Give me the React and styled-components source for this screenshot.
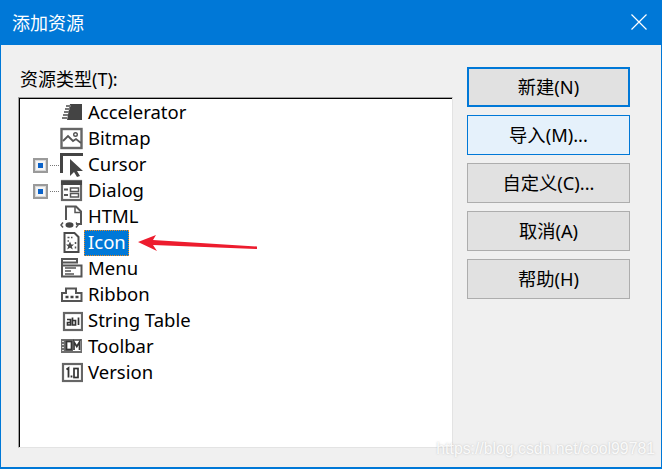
import React from "react";
import styled, { createGlobalStyle } from "styled-components";

const Global = createGlobalStyle`
  html, body { margin: 0; padding: 0; background: #f0f0f0; }
  * { box-sizing: border-box; }
`;

const FONT = `"Noto Sans", "Noto Sans CJK SC", sans-serif`;

const Window = styled.div`
  position: relative;
  width: 662px;
  height: 469px;
  display: flex;
  flex-direction: column;
  border: solid #0078d7;
  border-width: 0 1px 2px 1px;
  background: #f0f0f0;
  font-family: ${FONT};
  color: #000;
  overflow: hidden;
`;

const TitleBar = styled.div`
  height: 45px;
  margin: 0 -1px;
  padding: 0 15px 2px 12px;
  display: flex;
  align-items: center;
  justify-content: space-between;
  background: #0078d7;
  color: #fff;
  font-size: 18px;
  flex: none;
`;

const Body = styled.div`
  flex: 1;
  display: flex;
  gap: 14px;
  padding: 22px 0 0 17px;
`;

const LeftPane = styled.div`
  width: 435px;
  display: flex;
  flex-direction: column;
`;

const FieldLabel = styled.div`
  height: 30px;
  padding-left: 2px;
  font-size: 18px;
  line-height: 24px;
`;

const TreeBox = styled.div`
  height: 351px;
  padding: 2px 0 0 1px;
  background: #fff;
  border: 1px solid;
  border-color: #a0a0a0 #e3e3e3 #e3e3e3 #a0a0a0;
  box-shadow: inset 1px 1px 0 #000;
`;

const TreeRow = styled.div`
  height: 26px;
  display: flex;
  align-items: center;
`;

const Slot = styled.div`
  width: 40px;
  height: 100%;
  padding-left: 13px;
  display: flex;
  align-items: center;
  flex: none;
`;

const Expander = styled.div`
  width: 15px;
  height: 15px;
  border: 2px solid #9a9a9a;
  background: #f4f4f4;
  box-shadow: inset 0 0 0 1px #d8d8d8;
  display: flex;
  align-items: center;
  justify-content: center;
  flex: none;
  &::after {
    content: "";
    width: 5px;
    height: 5px;
    background: #0a62c9;
  }
`;

const Dots = styled.div`
  width: 9px;
  margin-left: 2px;
  border-top: 1px dotted #777;
`;

const IconWrap = styled.svg`
  width: 23px;
  height: 24px;
  flex: none;
  fill: none;
  stroke: #555;
  stroke-width: 2;
`;

const RowLabel = styled.span`
  margin-left: 1px;
  padding: 0 2px 0 3px;
  height: 26px;
  line-height: 21px;
  font-size: 18.5px;
  border: 1px dotted ${(p) => (p.$selected ? "#f08a1d" : "transparent")};
  background: ${(p) => (p.$selected ? "#0078d7" : "transparent")};
  color: ${(p) => (p.$selected ? "#fff" : "#000")};
`;

const ButtonColumn = styled.div`
  width: 163px;
  display: flex;
  flex-direction: column;
  gap: 8px;
`;

const DialogButton = styled.div`
  height: 40px;
  padding-bottom: 2px;
  display: flex;
  align-items: center;
  justify-content: center;
  font-size: 18.3px;
  background: ${(p) => (p.$hover ? "#e5f1fb" : "#e1e1e1")};
  border: ${(p) => (p.$primary ? "2px solid #0078d7" : p.$hover ? "1px solid #0078d7" : "1px solid #adadad")};
`;

const Arrow = styled.svg`
  position: absolute;
  left: 135px;
  top: 232px;
  width: 125px;
  height: 22px;
`;

const Watermark = styled.div`
  position: absolute;
  right: 6px;
  bottom: 9px;
  font-family: "Liberation Sans", sans-serif;
  font-size: 15.8px;
  line-height: 18px;
  color: rgba(255, 255, 255, 0.9);
  text-shadow: 0 0 2px rgba(170, 170, 170, 0.7);
`;

const Close = () => (
  <svg width="16" height="16" viewBox="0 0 16 16" stroke="#fff" strokeWidth="1.2" fill="none">
    <path d="M.5.5l15 15M15.5.5l-15 15" />
  </svg>
);

const icons = {
  accelerator: (
    <>
      <path d="M10 3h12v16H7z" fill="#444" stroke="none" />
      <path d="M6 5h5M5 8h5M4 11h5M3 14h5M2 17h5" stroke="#777" strokeWidth="2" />
    </>
  ),
  bitmap: (
    <>
      <rect x="1.500" y="2" width="20" height="19" stroke="#666" strokeWidth="2.400" />
      <path d="M3 14l5-5 5 5 3-2 5 4" strokeWidth="1.800" />
      <circle cx="15.500" cy="7.500" r="1.800" strokeWidth="1.400" />
    </>
  ),
  cursor: (
    <>
      <path d="M1.500 20V1.500H23" strokeWidth="3" stroke="#444" />
      <path d="M10 6v17l4-4 3 5 3-1-3-5h6z" fill="#444" stroke="none" />
    </>
  ),
  dialog: (
    <>
      <rect x="2" y="2" width="19" height="19" strokeWidth="2.200" stroke="#666" />
      <path d="M1 4h21" strokeWidth="4" stroke="#444" />
      <path d="M4 10.500h4M4 16h4" strokeWidth="2.200" />
      <rect x="10.500" y="9" width="8" height="3.500" strokeWidth="1.500" />
      <rect x="10.500" y="14.500" width="8" height="3.500" strokeWidth="1.500" />
    </>
  ),
  html: (
    <>
      <path d="M6 15V1.500h10l5 5V19h-5" strokeWidth="2" />
      <path d="M15 1.500v6h6" strokeWidth="1.500" />
      <ellipse cx="9.500" cy="20" rx="4" ry="2.800" fill="#444" stroke="none" />
      <path d="M3 17.500L1 20l2 2.500M16 17.500l2 2.500-2 2.500" strokeWidth="1.500" />
    </>
  ),
  icon: (
    <>
      <path d="M4.500 2h10l4 4v15h-14z" strokeWidth="2" stroke="#4a4a4a" />
      <path d="M7.500 6.500h2M11 6.500h1.500M7.500 10h1.500" strokeWidth="1.500" />
      <path d="M10 10.500l1.300 3h2.700l-2.200 2 1 3-2.800-1.800-2.800 1.800 1-3-2.200-2h2.700z" fill="#4a4a4a" stroke="none" />
      <path d="M15.500 11v2M15.500 15.500v2" strokeWidth="1.500" />
    </>
  ),
  menu: (
    <>
      <rect x="2" y="2" width="15" height="3.500" strokeWidth="2" />
      <path d="M2 5.500V19.500h19.500V8.500H2" strokeWidth="2" />
      <path d="M5 11h11M5 14h6M5 17h9" strokeWidth="1.500" />
    </>
  ),
  ribbon: (
    <>
      <path d="M2 18V10h4V5.500h10V10h5.500v8z" strokeWidth="2" />
      <path d="M5.500 14h3M10.500 14h3M15.500 14h3" strokeWidth="2.600" stroke="#444" />
    </>
  ),
  stringTable: (
    <>
      <rect x="4" y="4" width="18" height="17" strokeWidth="2.200" stroke="#666" />
      <path d="M7 10.500h3.500V16H7.500v-2.500h3M12.500 8.500V16h3v-4.500h-3M18.500 8.500V16" strokeWidth="1.700" stroke="#333" />
    </>
  ),
  toolbar: (
    <>
      <path d="M1 4h21v14H1z" fill="#6e6e6e" stroke="none" />
      <rect x="6.500" y="6.500" width="5" height="8" fill="#fff" stroke="#333" strokeWidth="1.700" />
      <path d="M13 6h7.500v10H13z" fill="#fff" stroke="none" />
      <path d="M14 15V7l2.800 4.500L19.500 7v8" strokeWidth="1.700" stroke="#333" />
      <path d="M2 6.500h2M2 9.500h2M2 12.500h2M2 15.500h2" stroke="#ddd" strokeWidth="1" />
    </>
  ),
  version: (
    <>
      <rect x="3" y="3" width="19" height="17" strokeWidth="2.200" stroke="#666" />
      <path d="M6.500 8.500l2-1.500v9.500" strokeWidth="1.800" stroke="#333" />
      <path d="M11.500 14.500v2" strokeWidth="1.800" stroke="#333" />
      <rect x="14" y="7.500" width="4" height="9" strokeWidth="1.700" stroke="#333" />
    </>
  ),
};

const rows = [
  { key: "accelerator", label: "Accelerator" },
  { key: "bitmap", label: "Bitmap" },
  { key: "cursor", label: "Cursor", expandable: true },
  { key: "dialog", label: "Dialog", expandable: true },
  { key: "html", label: "HTML" },
  { key: "icon", label: "Icon", selected: true },
  { key: "menu", label: "Menu" },
  { key: "ribbon", label: "Ribbon" },
  { key: "stringTable", label: "String Table" },
  { key: "toolbar", label: "Toolbar" },
  { key: "version", label: "Version" },
];

export default function App() {
  return (
    <Window>
      <Global />
      <TitleBar>
        添加资源
        <Close />
      </TitleBar>
      <Body>
        <LeftPane>
          <FieldLabel>资源类型(T):</FieldLabel>
          <TreeBox>
            {rows.map((r) => (
              <TreeRow key={r.key}>
                <Slot>
                  {r.expandable && (
                    <>
                      <Expander />
                      <Dots />
                    </>
                  )}
                </Slot>
                <IconWrap viewBox="0 0 23 24">{icons[r.key]}</IconWrap>
                <RowLabel $selected={r.selected}>{r.label}</RowLabel>
              </TreeRow>
            ))}
          </TreeBox>
        </LeftPane>
        <ButtonColumn>
          <DialogButton $primary>新建(N)</DialogButton>
          <DialogButton $hover>导入(M)...</DialogButton>
          <DialogButton>自定义(C)...</DialogButton>
          <DialogButton>取消(A)</DialogButton>
          <DialogButton>帮助(H)</DialogButton>
        </ButtonColumn>
      </Body>
      <Arrow viewBox="0 0 125 22">
        <path d="M2 10L20 3l-3 5 104 6.500v2.500L17 13l4 6z" fill="#ed1c2e" />
      </Arrow>
      <Watermark>https://blog.csdn.net/cool99781</Watermark>
    </Window>
  );
}
